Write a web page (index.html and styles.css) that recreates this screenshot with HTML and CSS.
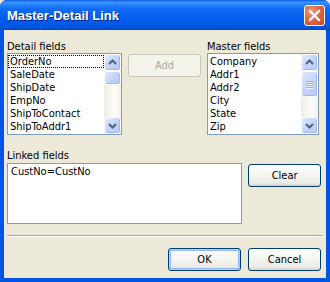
FILE: index.html
```html
<!DOCTYPE html>
<html>
<head>
<meta charset="utf-8">
<link rel="stylesheet" href="styles.css">
</head>
<body>
<div class="window">
  <div class="titlebar">
    <span class="title">Master-Detail Link</span>
    <span class="close"><svg width="13" height="13" viewBox="0 0 13 13"><path d="M2 2 L11 11 M11 2 L2 11" stroke="#fff" stroke-width="2.2" stroke-linecap="square"/></svg></span>
  </div>
  <div class="client">
    <div class="toprow">
      <div class="col">
        <div class="label">Detail fields</div>
        <div class="listbox detail">
          <ul class="items">
            <li class="focus">OrderNo</li>
            <li>SaleDate</li>
            <li>ShipDate</li>
            <li>EmpNo</li>
            <li>ShipToContact</li>
            <li>ShipToAddr1</li>
          </ul>
          <div class="scrollbar">
            <div class="sbtn"><svg width="15" height="15" viewBox="0 0 15 15"><path d="M4 9 L7.5 5.5 L11 9" fill="none" stroke="#4D6185" stroke-width="2"/></svg></div>
            <div class="thumb small"></div>
            <div class="track"></div>
            <div class="sbtn"><svg width="15" height="15" viewBox="0 0 15 15"><path d="M4 6 L7.5 9.5 L11 6" fill="none" stroke="#4D6185" stroke-width="2"/></svg></div>
          </div>
        </div>
      </div>
      <div class="addcol">
        <button class="btn disabled">Add</button>
      </div>
      <div class="col">
        <div class="label">Master fields</div>
        <div class="listbox master">
          <ul class="items">
            <li>Company</li>
            <li>Addr1</li>
            <li>Addr2</li>
            <li>City</li>
            <li>State</li>
            <li>Zip</li>
          </ul>
          <div class="scrollbar">
            <div class="sbtn"><svg width="15" height="15" viewBox="0 0 15 15"><path d="M4 9 L7.5 5.5 L11 9" fill="none" stroke="#4D6185" stroke-width="2"/></svg></div>
            <div class="thumb big"><span class="grip"></span><span class="grip"></span><span class="grip"></span><span class="grip"></span></div>
            <div class="track"></div>
            <div class="sbtn"><svg width="15" height="15" viewBox="0 0 15 15"><path d="M4 6 L7.5 9.5 L11 6" fill="none" stroke="#4D6185" stroke-width="2"/></svg></div>
          </div>
        </div>
      </div>
    </div>
    <div class="label linklabel">Linked fields</div>
    <div class="linkrow">
      <div class="listbox linked">
        <ul class="items"><li>CustNo=CustNo</li></ul>
      </div>
      <button class="btn">Clear</button>
    </div>
    <div class="separator"></div>
    <div class="footer">
      <button class="btn default">OK</button>
      <button class="btn">Cancel</button>
    </div>
  </div>
</div>
</body>
</html>
```
FILE: styles.css
```css
html, body {
  margin: 0;
  padding: 0;
  background: #ECE9D8;
}
body {
  font-family: "DejaVu Sans Condensed", "DejaVu Sans", sans-serif;
  font-size: 11px;
  color: #000;
}
.window {
  width: 330px;
  height: 282px;
  display: flex;
  flex-direction: column;
  background: #0054E3;
  border-radius: 7px 7px 0 0;
  overflow: hidden;
}
.titlebar {
  height: 30px;
  flex: none;
  display: flex;
  align-items: center;
  justify-content: space-between;
  padding: 0 5px 0 7px;
  background: linear-gradient(#0A5AE6 0%, #3D93FF 7%, #2B86FF 14%, #0F6CF6 30%, #0661EF 55%, #0259E8 80%, #0252DA 93%, #0045C0 100%);
}
.title {
  font-family: "Liberation Sans", Arial, sans-serif;
  font-weight: bold;
  font-size: 13px;
  color: #fff;
  text-shadow: 1px 1px 0 #0A1E8C;
  padding-top: 1px;
}
.close {
  width: 21px;
  height: 21px;
  box-sizing: border-box;
  border: 1px solid #fff;
  border-radius: 3px;
  background: radial-gradient(circle at 35% 30%, #EE9B7D 0%, #E06845 45%, #C6451F 100%);
  display: flex;
  align-items: center;
  justify-content: center;
}
.client {
  flex: 1;
  margin: 0 4px 4px 4px;
  background: #ECE9D8;
  padding: 10px 5px 0 3px;
  display: flex;
  flex-direction: column;
}
.label {
  height: 13px;
  line-height: 13px;
}
.toprow {
  display: flex;
  align-items: flex-start;
}
.col {
  display: flex;
  flex-direction: column;
}
.listbox {
  margin-top: 0;
  box-sizing: border-box;
  border: 1px solid #7F9DB9;
  background: #fff;
  display: flex;
  overflow: hidden;
}
.detail {
  width: 115px;
  height: 82px;
}
.master {
  width: 112px;
  height: 82px;
}
.detail .items, .master .items {
  padding-top: 1px;
}
.addcol {
  width: 73px;
  margin: 14px 6px 0 6px;
}
.items {
  list-style: none;
  margin: 0;
  padding: 0;
  flex: 1;
  min-width: 0;
}
.items li {
  height: 13px;
  line-height: 13px;
  padding-left: 2px;
  white-space: nowrap;
  box-sizing: border-box;
}
.items li.focus {
  outline: 1px dotted #000;
  outline-offset: -1px;
}
.scrollbar {
  width: 17px;
  flex: none;
  display: flex;
  flex-direction: column;
  background: linear-gradient(90deg, #EEEDE5, #FDFDFA 60%, #F3F1EA);
}
.sbtn, .thumb {
  width: 17px;
  height: 17px;
  box-sizing: border-box;
  border: 1px solid #fff;
  border-radius: 3px;
  background: linear-gradient(135deg, #E2EBFE 0%, #C4D4FB 50%, #B4C8F6 100%);
  box-shadow: inset -1px -1px 0 #A3B9EC;
  display: flex;
  align-items: center;
  justify-content: center;
  flex: none;
}
.sbtn svg { display: block; }
.thumb.small { height: 14px; }
.thumb.big {
  height: 26px;
  flex-direction: column;
  gap: 1px;
}
.grip {
  width: 7px;
  height: 1px;
  background: #8CB0F8;
  box-shadow: 0 1px 0 #EEF4FE;
}
.track { flex: 1; }
.linklabel {
  margin-top: 14px;
}
.linkrow {
  display: flex;
  align-items: flex-start;
  margin-top: 1px;
}
.linked {
  width: 236px;
  height: 61px;
  padding: 1px 2px;
}
.linked .items li { padding-left: 1px; }
.btn {
  width: 73px;
  height: 23px;
  box-sizing: border-box;
  border: 1px solid #003C74;
  border-radius: 3px;
  background: linear-gradient(#FFFFFF 0%, #F7F7F4 40%, #ECEBE6 85%, #D6D0C5 100%);
  font-family: inherit;
  font-size: 11px;
  color: #000;
  padding: 0;
  margin: 0;
}
.linkrow .btn {
  margin: 1px 0 0 6px;
}
.btn.disabled {
  border-color: #C9C7BA;
  background: #F5F4EA;
  color: #ACA899;
}
.btn.default {
  box-shadow: inset 0 0 0 1px #B6D0FA, inset 0 0 0 2px #95B7F4;
}
.separator {
  margin-top: 11px;
  margin-right: -2px;
  border-top: 1px solid #ACA899;
  border-bottom: 1px solid #fff;
  height: 0;
}
.footer {
  display: flex;
  justify-content: flex-end;
  gap: 7px;
  margin-top: 11px;
}
```
